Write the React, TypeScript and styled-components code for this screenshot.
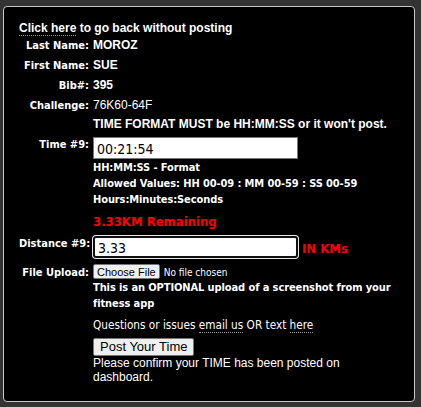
import React from "react";
import styled, { createGlobalStyle } from "styled-components";

const GlobalStyle = createGlobalStyle`
  html, body {
    margin: 0;
    padding: 0;
    background: #333333;
  }
  body {
    font-family: "Liberation Sans", Arial, sans-serif;
    color: #ffffff;
  }
`;

const tahoma = `"DejaVu Sans Condensed", "DejaVu Sans", Tahoma, sans-serif`;

const Page = styled.div`
  padding: 6px 6px 6px 3px;
`;

const Panel = styled.div`
  background: #000000;
  border: 1px solid #c8c8c8;
  border-radius: 4px;
  padding: 14px 15px 16px 15px;
  box-sizing: border-box;
  min-height: 396px;
`;

const BackLine = styled.div`
  font: bold 12px/14px "Liberation Sans", Arial, sans-serif;
`;

const PlainLink = styled.a`
  color: #ffffff;
  text-decoration: none;
  border-bottom: 1px dotted #9a9a9a;
`;

const Row = styled.div<{ $align?: "baseline" | "start"; $mt?: number; $h?: number }>`
  display: grid;
  grid-template-columns: 70px 1fr;
  column-gap: 4px;
  align-items: ${(p) => p.$align ?? "baseline"};
  margin-top: ${(p) => p.$mt ?? 0}px;
  ${(p) => (p.$h ? `height: ${p.$h}px;` : "")}
`;

const Label = styled.label<{ $pt?: number }>`
  font: bold 11px/13px ${tahoma};
  text-align: right;
  white-space: nowrap;
  padding-top: ${(p) => p.$pt ?? 0}px;
`;

const Value = styled.div<{ $bold?: boolean }>`
  font: ${(p) => (p.$bold ? "bold" : "normal")} 12px/20px "Liberation Sans", Arial, sans-serif;
`;

const Cell = styled.div`
  display: flex;
  flex-direction: column;
  align-items: flex-start;
`;

const Warning = styled.div`
  font: bold 12px/16px "Liberation Sans", Arial, sans-serif;
  white-space: nowrap;
`;

const TextInput = styled.input<{ $focused?: boolean }>`
  box-sizing: border-box;
  width: 205px;
  height: 22px;
  margin: 0;
  padding: 1px 3px 0 3px;
  background: #ffffff;
  color: #000000;
  font: 14px ${tahoma};
  border: ${(p) => (p.$focused ? "2px solid #101010" : "1px solid #767676")};
  border-radius: ${(p) => (p.$focused ? "3px" : "0")};
  box-shadow: ${(p) => (p.$focused ? "0 0 0 1px #e6e6e6" : "none")};
  outline: none;
`;

const Note = styled.div<{ $mt?: number }>`
  font: bold 11px/16px ${tahoma};
  letter-spacing: -0.1px;
  margin-top: ${(p) => p.$mt ?? 0}px;
`;

const Alert = styled.div<{ $mt?: number }>`
  font: bold 13px/18px ${tahoma};
  color: #ff0000;
  margin-top: ${(p) => p.$mt ?? 0}px;
  white-space: nowrap;
`;

const InputLine = styled.div`
  display: flex;
  align-items: baseline;
  gap: 4px;
`;

const FileInput = styled.input`
  font: 10px ${tahoma};
  color: #ffffff;
  margin: 0;
  &::file-selector-button {
    font: 11px "Liberation Sans", Arial, sans-serif;
    height: 15px;
    line-height: 12px;
    padding: 0 3px;
    margin-right: 4px;
    background: #efefef;
    color: #000000;
    border: 1px solid #767676;
    border-radius: 2px;
  }
`;

const Help = styled.div<{ $mt?: number }>`
  font: 11.7px/16px ${tahoma};
  margin-top: ${(p) => p.$mt ?? 0}px;
`;

const SubmitButton = styled.button`
  font: 13px/14px "Liberation Sans", Arial, sans-serif;
  padding: 1px 6px;
  margin: 5px 0 0 0;
  background: #efefef;
  color: #000000;
  border: 1px solid #767676;
  border-radius: 2px;
`;

const Confirm = styled.div`
  font: 12px/14px "Liberation Sans", Arial, sans-serif;
`;

export default function App() {
  return (
    <>
      <GlobalStyle />
      <Page>
        <Panel>
          <BackLine>
            <PlainLink href="#">Click here</PlainLink> to go back without posting
          </BackLine>

          <Row $h={20}>
            <Label>Last Name:</Label>
            <Value $bold>MOROZ</Value>
          </Row>
          <Row $h={20}>
            <Label>First Name:</Label>
            <Value $bold>SUE</Value>
          </Row>
          <Row $h={20}>
            <Label>Bib#:</Label>
            <Value $bold>395</Value>
          </Row>
          <Row $h={20}>
            <Label>Challenge:</Label>
            <Value>76K60-64F</Value>
          </Row>

          <Row $mt={1}>
            <span />
            <Warning>TIME FORMAT MUST be HH:MM:SS or it won't post.</Warning>
          </Row>

          <Row $align="start" $mt={5}>
            <Label $pt={1}>Time #9:</Label>
            <Cell>
              <TextInput defaultValue="00:21:54" />
              <Note $mt={1}>HH:MM:SS - Format</Note>
              <Note>Allowed Values: HH 00-09 : MM 00-59 : SS 00-59</Note>
              <Note>Hours:Minutes:Seconds</Note>
              <Alert $mt={5}>3.33KM Remaining</Alert>
            </Cell>
          </Row>

          <Row $align="start" $mt={5}>
            <Label $pt={1}>Distance #9:</Label>
            <InputLine>
              <TextInput $focused defaultValue="3.33" />
              <Alert>IN KMs</Alert>
            </InputLine>
          </Row>

          <Row $mt={6}>
            <Label>File Upload:</Label>
            <Cell>
              <FileInput type="file" />
            </Cell>
          </Row>

          <Row $mt={1}>
            <span />
            <Cell>
              <Note>This is an OPTIONAL upload of a screenshot from your fitness app</Note>
              <Help $mt={5}>
                Questions or issues <PlainLink href="#">email us</PlainLink> OR text{" "}
                <PlainLink href="#">here</PlainLink>
              </Help>
              <SubmitButton type="button">Post Your Time</SubmitButton>
              <Confirm>Please confirm your TIME has been posted on dashboard.</Confirm>
            </Cell>
          </Row>
        </Panel>
      </Page>
    </>
  );
}
